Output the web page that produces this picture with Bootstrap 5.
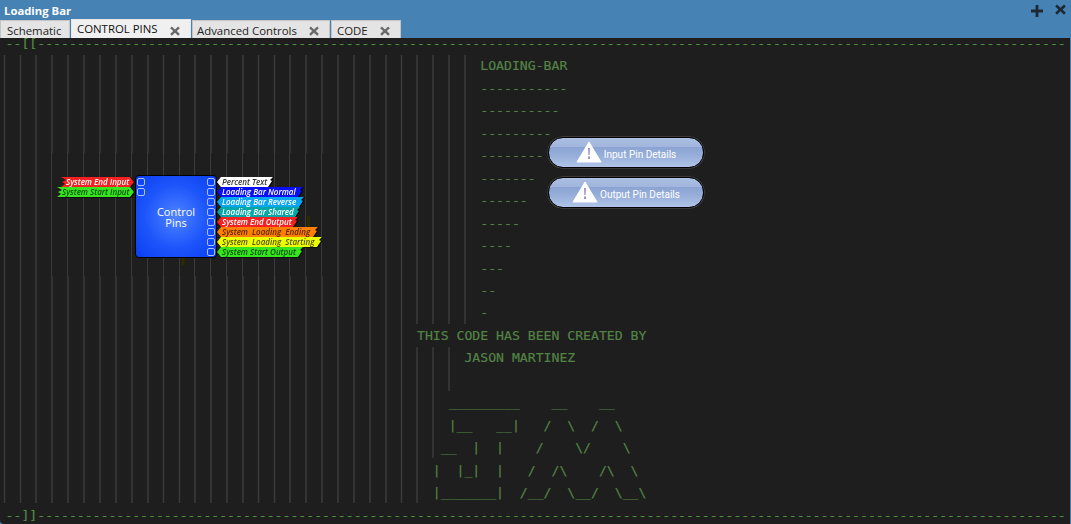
<!DOCTYPE html>
<html lang="en">
<head>
<meta charset="utf-8">
<title>Loading Bar</title>
<link href="https://cdn.jsdelivr.net/npm/bootstrap@5.3.0/dist/css/bootstrap.min.css" rel="stylesheet">
<style>
html,body{height:100%;margin:0;overflow:hidden;background:#4682b4;}
body{font-family:"Open Sans","Noto Sans",sans-serif;font-size:12px;}
.win-title{height:20px;padding:1px 5px 0 4px;color:#fff;font-weight:700;font-size:11.3px;line-height:19px;}
.win-actions{gap:12px;}
.win-actions svg{display:block;}
.win-actions svg+svg{margin-top:-3px;}
.tabstrip{height:18px;border:0;flex-wrap:nowrap;}
.tabstrip .nav-link{height:18px;margin:0 1px 0 0;padding:2px 5px 0 5px;border:1px solid #c4c4c4;border-bottom:0;border-radius:0;background:#e4e4e4;color:#222;font-size:11.4px;line-height:15px;display:flex;align-items:flex-start;white-space:nowrap;}
.tabstrip .nav-link.active{background:#f0f0f0;color:#111;height:19px;margin-top:-1px;padding-top:1px;border-color:#e8e8e8;}
.tabstrip .tab-x{margin:3px 5px 0 auto;}
.tabstrip .active .tab-x{margin-top:5px;}
.tab-a{width:70px;}.tab-b{width:120px;}.tab-c{width:138px;}.tab-d{width:70px;}
.tabstrip .tab-a{padding-left:6px;}.tabstrip .tab-c{padding-left:4px;}
.code-pane{position:relative;height:486px;width:1070px;background:#1e1e1e;overflow:hidden;border-bottom-left-radius:4px;}
.code-lines{position:relative;margin:-5px 0 0;padding:0 0 0 5.6px;font-family:"DejaVu Sans Mono","Liberation Mono",monospace;font-size:13.15px;line-height:22.46px;color:#548445;-webkit-text-stroke:.2px #548445;overflow:hidden;white-space:pre;}
.code-lines .rule{color:#4f8f3f;}
.guides{position:absolute;left:0;top:-38px;pointer-events:none;}
.node-box{position:absolute;left:135px;top:137px;width:82px;height:83px;border:1px solid #000;border-radius:4px;background:radial-gradient(circle at 50% 50%,#4f83ff 0%,#1d55fb 55%,#0a3ef0 100%);color:#fff;font-family:"Open Sans",sans-serif;font-size:11px;line-height:11px;text-align:center;display:flex;align-items:center;justify-content:center;}
.node-box span{margin-top:1px;}
.pin-box{position:absolute;width:8px;height:8px;border:1px solid #a9c3ff;border-radius:2px;}
.pin-tag{position:absolute;height:10px;font-family:"Open Sans",sans-serif;font-style:italic;font-size:8px;line-height:10px;white-space:pre;filter:drop-shadow(1px 0 0 #000) drop-shadow(0 1px 0 #111);}
.pin-tag b{display:block;height:10px;font-weight:600;}
.tag-in b{padding-left:5px;clip-path:polygon(0 0,calc(100% - 4px) 0,100% 50%,calc(100% - 4px) 100%,0 100%,4px 70%,1px 50%,5px 30%);}
.tag-out b{padding-left:5px;clip-path:polygon(4px 0,100% 0,calc(100% - 3px) 30%,calc(100% - 1px) 40%,calc(100% - 5px) 100%,4px 100%,0 50%);}
.tag-red b{background:#f3211f;color:#fff;}
.tag-green b{background:#36e51e;color:#0b4d0b;}
.tag-white b{background:#fff;color:#333;}
.tag-blue b{background:#0a0ef5;color:#fff;}
.tag-sky b{background:#08a5f0;color:#fff;}
.tag-teal b{background:#07a6a6;color:#fff;}
.tag-orange b{background:#ff8000;color:#5a2500;}
.tag-yellow b{background:#ecff00;color:#555000;}
.pin-btn{position:absolute;left:548px;width:156px;height:31px;padding:0;border:1px solid #000;border-radius:15px;color:#fff;font-family:Roboto,sans-serif;font-size:10px;line-height:1;background:linear-gradient(180deg,#aabfe3 0,#a2b6dd 30%,#8ba4d2 32%,#97aed9 60%,#b0c4e8 100%);display:flex;align-items:center;justify-content:center;gap:2px;box-shadow:0 0 0 .5px #555;}
.pin-btn:hover{color:#fff;background:linear-gradient(180deg,#aabfe3 0,#a2b6dd 30%,#8ba4d2 32%,#97aed9 60%,#b0c4e8 100%);border-color:#000;}
.pin-btn svg{margin-top:-2px;}
.pin-btn span{padding-top:4px;}
.btn-one{top:99px;}.btn-two{top:139px;}
</style>
</head>
<body>
<div class="win-title d-flex justify-content-between align-items-center">
  <span>Loading Bar</span>
  <span class="win-actions d-flex align-items-center">
    <svg width="12" height="12" viewBox="0 0 12 12"><path d="M4.600 0h2.800v4.600H12v2.800H7.400V12H4.600V7.400H0V4.600h4.600z" fill="#1e2a33"/></svg>
    <svg width="11" height="11" viewBox="0 0 12 12"><path d="M2.200.6 6 4.200 9.800.6l2 2L8.200 6l3.600 3.600-2 2L6 8 2.200 11.600l-2-2L3.800 6 .2 2.600z" fill="#1e2a33"/></svg>
  </span>
</div>
<ul class="nav nav-tabs tabstrip">
  <li class="nav-item"><a class="nav-link tab-a" href="#">Schematic</a></li>
  <li class="nav-item"><a class="nav-link active tab-b" href="#">CONTROL PINS<svg class="tab-x" width="10" height="10" viewBox="0 0 12 12"><path d="M2.200.6 6 4.200 9.800.6l2 2L8.200 6l3.600 3.600-2 2L6 8 2.200 11.600l-2-2L3.800 6 .2 2.600z" fill="#6a6a6a"/></svg></a></li>
  <li class="nav-item"><a class="nav-link tab-c" href="#">Advanced Controls<svg class="tab-x" width="10" height="10" viewBox="0 0 12 12"><path d="M2.200.6 6 4.200 9.800.6l2 2L8.200 6l3.600 3.600-2 2L6 8 2.200 11.600l-2-2L3.800 6 .2 2.600z" fill="#6a6a6a"/></svg></a></li>
  <li class="nav-item"><a class="nav-link tab-d" href="#">CODE<svg class="tab-x" width="10" height="10" viewBox="0 0 12 12"><path d="M2.200.6 6 4.200 9.800.6l2 2L8.200 6l3.600 3.600-2 2L6 8 2.200 11.600l-2-2L3.800 6 .2 2.600z" fill="#6a6a6a"/></svg></a></li>
</ul>
<div class="code-pane">
  <svg class="guides" width="1070" height="524" viewBox="0 0 1070 524" fill="none">
    <path stroke="#3b3b3b" stroke-width="1.5" d="M4.500 55V503M20.500 55V503M36 55V503M338 55V503M354 55V503M370 55V503M386 55V503M401.500 55V503M417 55V324M417 347V503M433 55V324M433 347V458M449 55V324M449 347V391M465 55V324"/>
    <path stroke="#3b3b3b" stroke-width="1.5" d="M52 55V153M52 276V503M68 55V153M68 276V503M84 55V153M84 276V503M100 55V153M100 276V503M116 55V153M116 276V503M132 55V153M132 276V503M148 55V153M148 276V503M163.500 55V153M163.500 276V503M179.500 55V153M179.500 276V503M195 55V153M195 276V503M211 55V153M211 276V503M227 55V153M227 276V503M243 55V153M243 276V503M258.500 55V153M258.500 276V503M274.500 55V153M274.500 276V503M290 55V153M290 276V503M306 55V153M306 276V503M322 55V153M322 276V503"/>
    <path stroke="#3a3a3a" stroke-width="1" d="M51.500 153V276M67.500 153V276M83.500 153V276M99.500 153V276M115.500 153V276M131.500 153V276M147.500 153V276M163.500 153V276M179.500 153V276M194.500 153V276M210.500 153V276M226.500 153V276M242.500 153V276M258.500 153V276M274.500 153V276M289.500 153V276M305.500 153V276M321.500 153V276"/>
    <path fill="#2b2b00" d="M181.500 258h3v7h-3zM307 216h3v11h-3z"/>
  </svg>
<pre class="code-lines"><span class="rule">--[[----------------------------------------------------------------------------------------------------------------------------------</span>
                                                            LOADING-BAR
                                                            -----------
                                                            ----------
                                                            ---------
                                                            --------
                                                            -------
                                                            ------
                                                            -----
                                                            ----
                                                            ---
                                                            --
                                                            -
                                                    THIS CODE HAS BEEN CREATED BY
                                                          JASON MARTINEZ

                                                        _________    __    __
                                                        |__   __|   /  \  /  \
                                                       __  |  |    /    \/    \
                                                      |  |_|  |   /  /\    /\  \
                                                      |_______|  /__/  \__/  \__\
<span class="rule">--]]----------------------------------------------------------------------------------------------------------------------------------</span></pre>

  <div class="node-box"><span>Control<br>Pins</span></div>
  <i class="pin-box" style="left:137px;top:140px"></i><i class="pin-box" style="left:137px;top:150px"></i>
  <i class="pin-box" style="left:207px;top:140px"></i><i class="pin-box" style="left:207px;top:150px"></i><i class="pin-box" style="left:207px;top:160px"></i><i class="pin-box" style="left:207px;top:170px"></i><i class="pin-box" style="left:207px;top:180px"></i><i class="pin-box" style="left:207px;top:190px"></i><i class="pin-box" style="left:207px;top:200px"></i><i class="pin-box" style="left:207px;top:210px"></i>

  <div class="pin-tag tag-in tag-red" style="left:61px;top:139px;width:73px"><b>System End Input</b></div>
  <div class="pin-tag tag-in tag-green" style="left:57px;top:149px;width:77px"><b>System Start Input</b></div>

  <div class="pin-tag tag-out tag-white" style="left:217px;top:139px;width:56px"><b>Percent Text</b></div>
  <div class="pin-tag tag-out tag-blue" style="left:217px;top:149px;width:86px"><b>Loading Bar Normal</b></div>
  <div class="pin-tag tag-out tag-sky" style="left:217px;top:159px;width:87px"><b>Loading Bar Reverse</b></div>
  <div class="pin-tag tag-out tag-teal" style="left:217px;top:169px;width:83px"><b>Loading Bar Shared</b></div>
  <div class="pin-tag tag-out tag-red" style="left:217px;top:179px;width:81px"><b>System End Output</b></div>
  <div class="pin-tag tag-out tag-orange" style="left:217px;top:189px;width:101px"><b>System  Loading  Ending</b></div>
  <div class="pin-tag tag-out tag-yellow" style="left:217px;top:199px;width:105px"><b>System  Loading  Starting</b></div>
  <div class="pin-tag tag-out tag-green" style="left:217px;top:209px;width:86px"><b>System Start Output</b></div>

  <button type="button" class="btn pin-btn btn-one"><svg width="26" height="22" viewBox="0 0 26 22"><path d="M13 1 25 21H1z" fill="#fff" stroke="#fff" stroke-linejoin="round"/><path d="M12 7h2l-.4 7h-1.200z" fill="#a08fc8"/><rect x="12" y="15.500" width="2" height="2.500" fill="#a08fc8"/></svg><span>Input Pin Details</span></button>
  <button type="button" class="btn pin-btn btn-two"><svg width="26" height="22" viewBox="0 0 26 22"><path d="M13 1 25 21H1z" fill="#fff" stroke="#fff" stroke-linejoin="round"/><path d="M12 7h2l-.4 7h-1.200z" fill="#a08fc8"/><rect x="12" y="15.500" width="2" height="2.500" fill="#a08fc8"/></svg><span>Output Pin Details</span></button>
</div>
<script src="https://cdn.jsdelivr.net/npm/bootstrap@5.3.0/dist/js/bootstrap.bundle.min.js"></script>
</body>
</html>
